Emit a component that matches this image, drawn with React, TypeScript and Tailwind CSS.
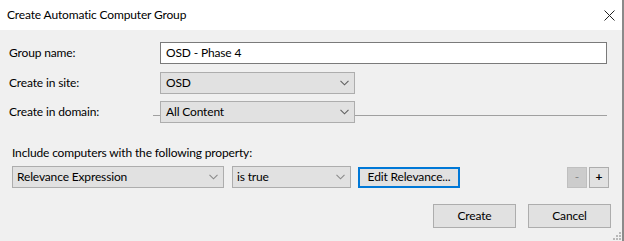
import React from "react";

const Chevron = ({ color = "#606060" }: { color?: string }) => (
  <svg width="9" height="6" viewBox="0 0 9 6" className="shrink-0">
    <path d="M0.5 0.8 L4.5 4.8 L8.5 0.8" fill="none" stroke={color} strokeWidth="1.1" />
  </svg>
);

function Select({ value, className, chevron }: { value: string; className: string; chevron?: string }) {
  return (
    <div
      className={`h-[22px] flex items-center justify-between bg-[#e1e1e1] border border-[#adadad] pl-[4px] pr-[5px] ${className}`}
    >
      <span className="leading-none">{value}</span>
      <Chevron color={chevron} />
    </div>
  );
}

export default function App() {
  return (
    <div className="w-[624px] h-[241px] bg-[#f0f0f0] border-r-2 border-[#8a8a8a] flex flex-col overflow-hidden text-[12px] tracking-[-0.15px] text-black font-['Lato','Noto_Sans',sans-serif]">
      <div className="h-[30px] shrink-0 bg-white flex items-center justify-between pl-[7px] pr-[7px]">
        <span>Create Automatic Computer Group</span>
        <svg width="11" height="11" viewBox="0 0 11 11">
          <path d="M0.5 0.5 L10.5 10.5 M10.5 0.5 L0.5 10.5" stroke="#222" strokeWidth="1" />
        </svg>
      </div>

      <div className="flex flex-col pl-[9px] pr-[15px] pt-[12px]">
        <div className="flex items-center h-[22px]">
          <span className="w-[151px] shrink-0">Group name:</span>
          <div className="flex-1 h-[22px] bg-white border border-[#7a7a7a] flex items-center pl-[5px]">
            OSD - Phase 4
          </div>
        </div>

        <div className="flex items-center h-[22px] mt-[8px]">
          <span className="w-[151px] shrink-0">Create in site:</span>
          <Select value="OSD" className="w-[195px] pl-[5px]" />
        </div>

        <div className="flex items-start h-[22px] mt-[7px]">
          <span className="w-[144px] shrink-0 self-center">Create in domain:</span>
          <div className="w-[7px] h-px bg-[#a0a0a0] mt-[14px]" />
          <Select value="All Content" className="w-[195px] pl-[5px] shrink-0" />
          <div className="flex-1 h-px bg-[#a0a0a0] mt-[14px]" />
        </div>
      </div>

      <div className="flex flex-col pl-[12px] pr-[13px] pt-[22px]">
        <span className="leading-[16px]">Include computers with the following property:</span>
        <div className="flex items-center mt-[5px]">
          <Select value="Relevance Expression" className="w-[212px]" chevron="#8a8a8a" />
          <Select value="is true" className="w-[119px] ml-[8px]" chevron="#8a8a8a" />
          <button className="w-[102px] h-[21px] ml-[7px] bg-[#e1e1e1] border-2 border-[#0078d7] flex items-center justify-center">
            Edit Relevance...
          </button>
          <div className="flex-1" />
          <button className="w-[20px] h-[21px] bg-[#cccccc] border border-[#bfbfbf] text-[#838383] flex items-center justify-center leading-none">
            -
          </button>
          <button className="w-[20px] h-[21px] ml-[2px] bg-[#e1e1e1] border border-[#adadad] flex items-center justify-center font-bold leading-none">
            +
          </button>
        </div>
      </div>

      <div className="flex justify-end items-start pr-[11px] pt-[16px] gap-[12px]">
        <button className="w-[83px] h-[24px] bg-[#e1e1e1] border border-[#adadad]">Create</button>
        <button className="w-[83px] h-[24px] bg-[#e1e1e1] border border-[#adadad]">Cancel</button>
      </div>

      <div className="flex-1 flex justify-end items-end pr-[1px] pb-[1px]">
        <svg width="10" height="10" viewBox="0 0 10 10">
          <rect x="8" y="2" width="2" height="2" fill="#b8b8b8" />
          <rect x="5" y="5" width="2" height="2" fill="#b8b8b8" />
          <rect x="8" y="5" width="2" height="2" fill="#b8b8b8" />
          <rect x="2" y="8" width="2" height="2" fill="#b8b8b8" />
          <rect x="5" y="8" width="2" height="2" fill="#b8b8b8" />
          <rect x="8" y="8" width="2" height="2" fill="#b8b8b8" />
        </svg>
      </div>
    </div>
  );
}
